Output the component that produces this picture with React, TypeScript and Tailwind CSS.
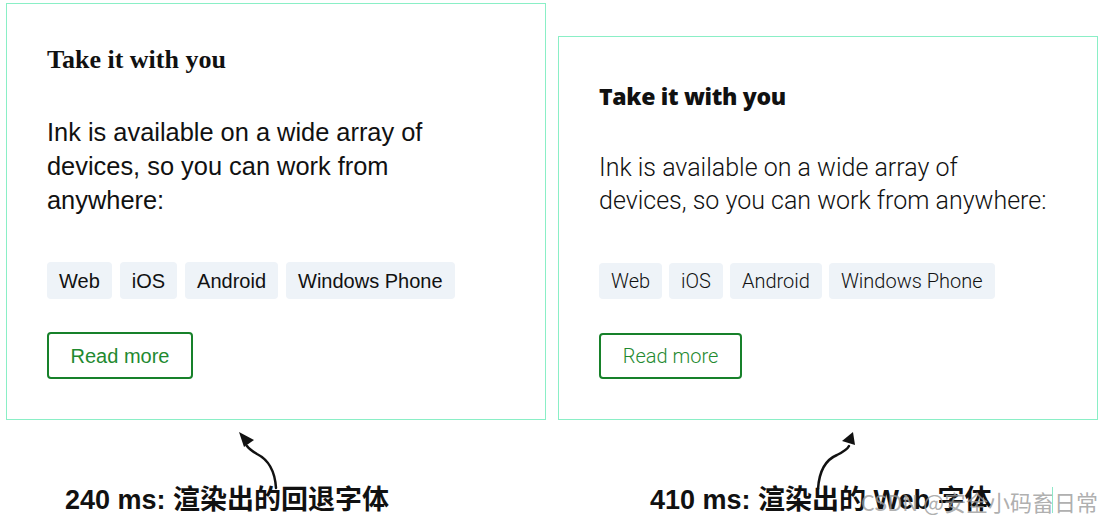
const tags = ["Web", "iOS", "Android", "Windows Phone"]

const body = "Ink is available on a wide array of devices, so you can work from anywhere:"

function FallbackCard() {
    return (
        <div className="w-[540px] border border-[#8aefc6] bg-white pt-[41px] pb-10 px-10 text-[#111]">
            <h3 className="font-['Liberation_Serif',serif] font-bold text-[26px] leading-[30px]">
                Take it with you
            </h3>
            <p className="mt-10 max-w-[440px] font-['Liberation_Sans',Arial,sans-serif] text-[25.4px] leading-[34px]">
                {body}
            </p>
            <div className="mt-[45px] flex gap-2">
                {tags.map((tag) => (
                    <span
                        key={tag}
                        className="h-[37px] px-3 flex items-center rounded bg-[#eef3f8] font-['Liberation_Sans',Arial,sans-serif] text-[20px]"
                    >
                        {tag}
                    </span>
                ))}
            </div>
            <button className="mt-[33px] w-[146px] h-[47px] flex items-center justify-center rounded border-2 border-[#17812a] text-[#1f8a30] font-['Liberation_Sans',Arial,sans-serif] text-[20px]">
                Read more
            </button>
        </div>
    )
}

function WebFontCard() {
    return (
        <div className="w-[540px] border border-[#8aefc6] bg-white pt-[44px] pb-10 px-10 text-[#111]">
            <h3 className="font-['Open_Sans',sans-serif] font-extrabold text-[23px] leading-[30px] tracking-[-0.3px]">
                Take it with you
            </h3>
            <p className="mt-10 font-['Roboto',sans-serif] font-light text-[25px] leading-[33px]">
                Ink is available on a wide array of
                <br />
                devices, so you can work from anywhere:
            </p>
            <div className="mt-[46px] flex gap-[7px]">
                {tags.map((tag) => (
                    <span
                        key={tag}
                        className="h-[36px] px-3 flex items-center rounded bg-[#eef3f8] font-['Roboto',sans-serif] font-light text-[20px]"
                    >
                        {tag}
                    </span>
                ))}
            </div>
            <button className="mt-[34px] w-[143px] h-[46px] flex items-center justify-center rounded border-2 border-[#17812a] text-[#1f8a30] font-['Roboto',sans-serif] font-light text-[20px]">
                Read more
            </button>
        </div>
    )
}

export default function App() {
    return (
        <div className="w-[1100px] h-[518px] bg-white overflow-hidden">
            {/* Cards */}
            <div className="flex items-end pt-[3px] pl-[6px] gap-[12px]">
                <FallbackCard />
                <WebFontCard />
            </div>

            {/* Arrows */}
            <div className="flex h-[64px]">
                <svg className="ml-[225px] w-[70px] h-[64px] overflow-visible" viewBox="0 0 70 64">
                    <path d="M51 68 C50 52 44 40 32 34 C27 31 24 29 22 26" fill="none" stroke="#111" strokeWidth="2.5" strokeLinecap="round" />
                    <polygon points="14,12 29,20 19,27" fill="#111" />
                </svg>
                <svg className="ml-[510px] w-[70px] h-[64px] overflow-visible" viewBox="0 0 70 64">
                    <path d="M13 69 C14 53 20 40 32 35 C38 32 42 30 44 26" fill="none" stroke="#111" strokeWidth="2.5" strokeLinecap="round" />
                    <polygon points="48,12 37,21 50,25" fill="#111" />
                </svg>
            </div>

            {/* Captions */}
            <div className="relative flex font-['Liberation_Sans','Noto_Sans_CJK_SC',sans-serif] font-bold text-[27px] leading-[33px] text-[#111]">
                <div className="w-[550px] pl-[65px]">240 ms: 渲染出的回退字体</div>
                <div className="pl-[100px]">410 ms: 渲染出的 Web 字体</div>
                <span className="absolute right-[2px] top-[4px] font-['Noto_Sans_CJK_SC',sans-serif] font-normal text-[22px] leading-[26px] text-[#9a9a9a]/80">
                    CSDN @安全小码畜日常
                </span>
                <span className="absolute left-[1052px] top-[3px] w-px h-[26px] bg-[#8fe8c8]" />
            </div>
        </div>
    )
}
